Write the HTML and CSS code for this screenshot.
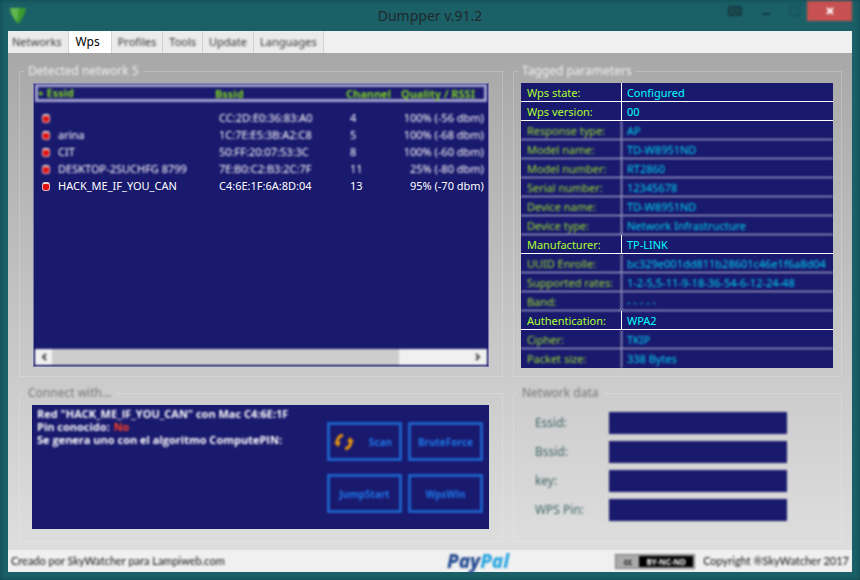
FILE: index.html
```html
<!DOCTYPE html>
<html lang="en">
<head>
  <meta charset="UTF-8">
  <meta name="viewport" content="width=device-width, initial-scale=1.0">
  <title>Dumpper v.91.2</title>
  <link rel="stylesheet" href="styles.css">
</head>
<body>
<div class="window">

  <header class="titlebar">
    <svg class="app-icon soft" width="16" height="18" viewBox="0 0 16 18">
      <path d="M0 1 L16 1 Q15 9 8 17 Q1 9 0 1Z" fill="#3a9a2e"/>
      <path d="M0 1 L9 1 L7 15 Q1 9 0 1Z" fill="#62b84c"/>
    </svg>
    <h1 class="title">Dumpper v.91.2</h1>
    <div class="controls soft">
      <button class="control" type="button" aria-label="Pin">
        <svg width="14" height="10" viewBox="0 0 14 10"><rect x="1" y="1" width="12" height="8" rx="1" fill="#1f4c54" stroke="#153a42" stroke-width="2"/><path d="M5 5h4" stroke="#153a42" stroke-width="2"/></svg>
      </button>
      <button class="control" type="button" aria-label="Minimize">
        <svg width="14" height="10" viewBox="0 0 14 10"><path d="M5 8h8" stroke="#123840" stroke-width="2"/></svg>
      </button>
      <button class="control" type="button" aria-label="Maximize">
        <svg width="14" height="10" viewBox="0 0 14 10"><rect x="4" y="1" width="9" height="8" fill="none" stroke="#164a52" stroke-width="1"/></svg>
      </button>
      <button class="control close" type="button" aria-label="Close">
        <svg width="10" height="10" viewBox="0 0 10 10"><path d="M2 2l6 6M8 2l-6 6" stroke="#fff" stroke-width="2"/></svg>
      </button>
    </div>
  </header>

  <nav class="tabs" role="tablist">
    <button class="tab" type="button" role="tab"><span class="soft">Networks</span></button>
    <button class="tab active" type="button" role="tab" aria-selected="true">Wps</button>
    <button class="tab" type="button" role="tab"><span class="soft">Profiles</span></button>
    <button class="tab" type="button" role="tab"><span class="soft">Tools</span></button>
    <button class="tab" type="button" role="tab"><span class="soft">Update</span></button>
    <button class="tab" type="button" role="tab"><span class="soft">Languages</span></button>
  </nav>

  <main class="panel">
    <fieldset class="group">
      <legend class="light soft">Detected network 5</legend>
      <div class="networks">
        <table class="network-list">
          <thead class="soft">
            <tr><th class="col-essid"><span class="sort">+</span> Essid</th><th class="col-bssid">Bssid</th><th class="col-channel">Channel</th><th class="col-quality">Quality / RSSI</th></tr>
          </thead>
          <tbody>
            <tr class="soft"><td><i class="lock"></i></td><td>CC:2D:E0:36:83:A0</td><td>4</td><td>100% (-56 dbm)</td></tr>
            <tr class="soft"><td><i class="lock"></i>arina</td><td>1C:7E:E5:3B:A2:C8</td><td>5</td><td>100% (-68 dbm)</td></tr>
            <tr class="soft"><td><i class="lock"></i>CIT</td><td>50:FF:20:07:53:3C</td><td>8</td><td>100% (-60 dbm)</td></tr>
            <tr class="soft"><td><i class="lock"></i>DESKTOP-2SUCHFG 8799</td><td>7E:B0:C2:B3:2C:7F</td><td>11</td><td>25% (-80 dbm)</td></tr>
            <tr><td><i class="lock"></i>HACK_ME_IF_YOU_CAN</td><td>C4:6E:1F:6A:8D:04</td><td>13</td><td>95% (-70 dbm)</td></tr>
          </tbody>
        </table>
        <div class="scrollbar soft">
          <button class="arrow" type="button" aria-label="Scroll left"><svg width="8" height="8" viewBox="0 0 8 8"><path d="M6 1L3 4l3 3" fill="none" stroke="#444" stroke-width="2"/></svg></button>
          <div class="track"><div class="thumb"></div></div>
          <button class="arrow" type="button" aria-label="Scroll right"><svg width="8" height="8" viewBox="0 0 8 8"><path d="M2 1l3 3-3 3" fill="none" stroke="#444" stroke-width="2"/></svg></button>
        </div>
      </div>
    </fieldset>

    <fieldset class="group">
      <legend class="light soft">Tagged parameters</legend>
      <div class="params-box">
        <table class="params">
          <tr class="clear"><th>Wps state:</th><td>Configured</td></tr>
          <tr class="clear"><th>Wps version:</th><td>00</td></tr>
          <tr><th>Response type:</th><td>AP</td></tr>
          <tr><th>Model name:</th><td>TD-W8951ND</td></tr>
          <tr><th>Model number:</th><td>RT2860</td></tr>
          <tr><th>Serial number:</th><td>12345678</td></tr>
          <tr><th>Device name:</th><td>TD-W8951ND</td></tr>
          <tr><th>Device type:</th><td>Network Infrastructure</td></tr>
          <tr class="clear"><th>Manufacturer:</th><td>TP-LINK</td></tr>
          <tr><th>UUID Enrolle:</th><td>bc329e001dd811b28601c46e1f6a8d04</td></tr>
          <tr><th>Supported rates:</th><td>1-2-5,5-11-9-18-36-54-6-12-24-48</td></tr>
          <tr><th>Band:</th><td>- - - - -</td></tr>
          <tr class="clear"><th>Authentication:</th><td>WPA2</td></tr>
          <tr><th>Cipher:</th><td>TKIP</td></tr>
          <tr><th>Packet size:</th><td>338 Bytes</td></tr>
        </table>
      </div>
    </fieldset>

    <fieldset class="group">
      <legend class="soft">Connect with...</legend>
      <div class="connect">
        <div class="log soft">
          <p>Red "HACK_ME_IF_YOU_CAN" con Mac C4:6E:1F</p>
          <p>Pin conocido: <span class="no">No</span></p>
          <p>Se genera uno con el algoritmo ComputePIN:</p>
        </div>
        <div class="actions soft">
          <button class="action scan" type="button">
            <svg width="20" height="16" viewBox="0 0 20 16">
              <path d="M9 1Q4 2 3 8M11 15Q16 14 17 8" fill="none" stroke="#e8960c" stroke-width="3"/>
              <path d="M0 8h7l-3 5zM13 8h7l-4 -5z" fill="#e8960c"/>
            </svg>
            Scan
          </button>
          <button class="action" type="button">BruteForce</button>
          <button class="action" type="button">JumpStart</button>
          <button class="action" type="button">WpsWin</button>
        </div>
      </div>
    </fieldset>

    <fieldset class="group">
      <legend class="soft">Network data</legend>
      <div class="data soft">
        <label for="essid">Essid:</label><input id="essid" type="text">
        <label for="bssid">Bssid:</label><input id="bssid" type="text">
        <label for="key">key:</label><input id="key" type="text">
        <label for="pin">WPS Pin:</label><input id="pin" type="text">
      </div>
    </fieldset>
  </main>

  <footer class="statusbar">
    <span class="soft">Creado por SkyWatcher para Lampiweb.com</span>
    <a class="paypal soft" href="#">Pay<span>Pal</span></a>
    <div class="rights soft">
      <div class="license"><span class="cc">cc</span><span class="terms">BY-NC-ND</span></div>
      <span>Copyright ®SkyWatcher 2017</span>
    </div>
  </footer>

</div>
</body>
</html>
```

FILE: styles.css
```css
* {
  box-sizing: border-box;
}

body {
  margin: 0;
  font-family: "Noto Sans", "Open Sans", sans-serif;
  font-size: 11px;
  line-height: 14px;
}

button {
  font: inherit;
  border: 0;
  padding: 0;
}

/* everything out of focus */
.soft {
  filter: blur(1px);
}

.window {
  display: flex;
  flex-direction: column;
  min-height: 100vh;
  padding: 0 8px 8px;
  background: #1b6067;
  box-shadow: inset 0 0 5px #0f444b;
}

/* title bar */
.titlebar {
  display: grid;
  grid-template-columns: 1fr auto 1fr;
  align-items: center;
  height: 31px;
}

.app-icon {
  margin-left: 2px;
}

.title {
  margin: 0;
  font-size: 14px;
  line-height: 20px;
  font-weight: 400;
  color: #1f292c;
}

.controls {
  display: flex;
  justify-content: flex-end;
  align-self: start;
  padding-top: 1px;
}

.control {
  display: flex;
  align-items: center;
  justify-content: center;
  width: 29px;
  height: 20px;
  background: none;
}

.close {
  width: 45px;
  background: #c75050;
}

/* tabs */
.tabs {
  display: flex;
  height: 22px;
  background: #f0f0f0;
}

.tab {
  padding: 0 6px;
  border-right: 1px solid #d2d2d2;
  background: #ebebeb;
  color: #333;
}

.tab:first-child {
  padding: 0 6px 0 4px;
}

.tab.active {
  padding: 0 11px 0 7px;
  background: #fff;
  color: #000;
  font-size: 12px;
}

/* main panel */
.panel {
  flex: 1;
  display: grid;
  grid-template-columns: minmax(0, 25fr) minmax(0, 17fr);
  grid-template-rows: auto 1fr;
  gap: 9px 10px;
  padding: 11px 10px 8px 11px;
  background: linear-gradient(#a8a8a8, #c8c8c8 60%, #dedede);
}

.group {
  display: flex;
  flex-direction: column;
  min-width: 0;
  margin: 0;
  padding: 5px 4px 8px;
  border: 1px solid rgba(255, 255, 255, 0.2);
}

legend {
  padding: 0 4px;
  font-size: 12px;
  color: #777;
}

legend.light {
  color: #f0f0f0;
}

/* detected networks */
.networks {
  flex: 1;
  display: flex;
  flex-direction: column;
  justify-content: space-between;
  margin: 0 9px 1px;
  padding: 0 1px 1px;
  border: 1px solid #7473a8;
  background: #19196e;
}

.network-list {
  width: 100%;
  table-layout: fixed;
  border-spacing: 0;
  color: #fff;
}

.network-list th {
  height: 17px;
  padding: 0;
  border: solid #a3a2d0;
  border-width: 3px 0;
  line-height: 11px;
  text-align: left;
  white-space: nowrap;
  color: #7ed321;
}

.network-list th:first-child {
  border-left-width: 3px;
}

.network-list th:last-child {
  border-right-width: 3px;
}

.network-list tbody::before {
  content: "";
  display: block;
  height: 7px;
}

.network-list td {
  height: 17px;
  padding: 0 0 0 4px;
  white-space: nowrap;
}

.network-list td:first-child {
  padding-left: 7px;
}

.network-list td:last-child {
  padding: 0 3px 0 0;
  text-align: right;
}

.col-essid {
  width: 180px;
}

.col-bssid {
  width: 131px;
}

.col-channel {
  width: 55px;
}

.sort {
  font-size: 10px;
}

.lock {
  display: inline-block;
  width: 8px;
  height: 9px;
  margin-right: 8px;
  border: 1px solid #e9b0b0;
  border-top: 2px solid #e9d5d5;
  border-radius: 3px;
  background: #e01010;
  vertical-align: -1px;
}

.scrollbar {
  display: flex;
  height: 16px;
  background: #f0f0f0;
}

.arrow {
  width: 17px;
  background: none;
}

.track {
  flex: 1;
}

.thumb {
  width: 83%;
  height: 100%;
  background: #cdcdcd;
}

/* tagged parameters */
.params-box {
  margin: 0 4px 0 3px;
}

.params {
  width: 100%;
  border-spacing: 0;
  table-layout: fixed;
  background: #19196e;
}

.params th,
.params td {
  height: 19px;
  padding: 1px 5px 0;
  border-bottom: 1px solid #d5d5ea;
  font-size: 11px;
  font-weight: 400;
  text-align: left;
  white-space: nowrap;
  color: #00d5f0;
  filter: blur(1px);
}

.params th {
  width: 101px;
  padding-left: 6px;
  padding-right: 0;
  border-right: 1px solid #d5d5ea;
  color: #9be02c;
}

.params .clear th,
.params .clear td {
  border-color: #fff;
  color: #0ff;
  filter: none;
}

.params .clear th {
  color: #adff2f;
}

.params tr:last-child > * {
  border-bottom: 0;
}

/* connect with */
.connect {
  flex: 1;
  display: flex;
  justify-content: space-between;
  margin: 0 9px 4px 8px;
  padding: 2px 6px 14px 5px;
  background: #19196e;
}

.log {
  font-family: "Open Sans", sans-serif;
  color: #fff;
  font-weight: 700;
  line-height: 13px;
}

.log p {
  margin: 0;
}

.no {
  margin-left: 1px;
  color: #ff4020;
}

.actions {
  display: grid;
  grid-template-columns: 75px 75px;
  grid-auto-rows: 39px;
  gap: 13px 6px;
  padding-top: 15px;
}

.action {
  border: 3px solid #1c60c8;
  background: #19196e;
  color: #1e78e8;
  font-size: 10px;
  font-weight: 700;
}

.scan {
  display: flex;
  align-items: center;
  justify-content: space-between;
  padding: 0 7px 0 4px;
}

/* network data */
.data {
  display: grid;
  grid-template-columns: 74px minmax(0, 178px);
  grid-auto-rows: 22px;
  gap: 7px 0;
  align-items: center;
  padding: 7px 0 0 17px;
  font-size: 12px;
  color: #3f6464;
}

.data input {
  width: 100%;
  height: 100%;
  border: 0;
  padding: 0 4px;
  background: #19196e;
  color: #fff;
}

/* status bar */
.statusbar {
  display: grid;
  grid-template-columns: 1fr auto auto;
  align-items: center;
  height: 22px;
  padding: 0 3px;
  background: #f0f0f0;
  font-family: Lato, sans-serif;
  color: #111;
  white-space: nowrap;
}

.paypal {
  margin-right: 106px;
  font-family: "Noto Sans", sans-serif;
  font-size: 19px;
  font-weight: 800;
  font-style: italic;
  text-decoration: none;
  color: #22498f;
}

.paypal span {
  color: #2ba6e0;
}

.rights {
  display: flex;
  align-items: center;
  justify-content: flex-end;
  gap: 8px;
}

.license {
  display: flex;
  width: 80px;
  height: 15px;
  padding: 1px;
  border: 1px solid #777;
  background: #aaa;
  font-family: "Noto Sans", sans-serif;
  font-size: 8px;
  line-height: 11px;
  font-weight: 700;
}

.cc {
  width: 22px;
  text-align: center;
}

.terms {
  flex: 1;
  background: #000;
  color: #fff;
  text-align: center;
}
```
